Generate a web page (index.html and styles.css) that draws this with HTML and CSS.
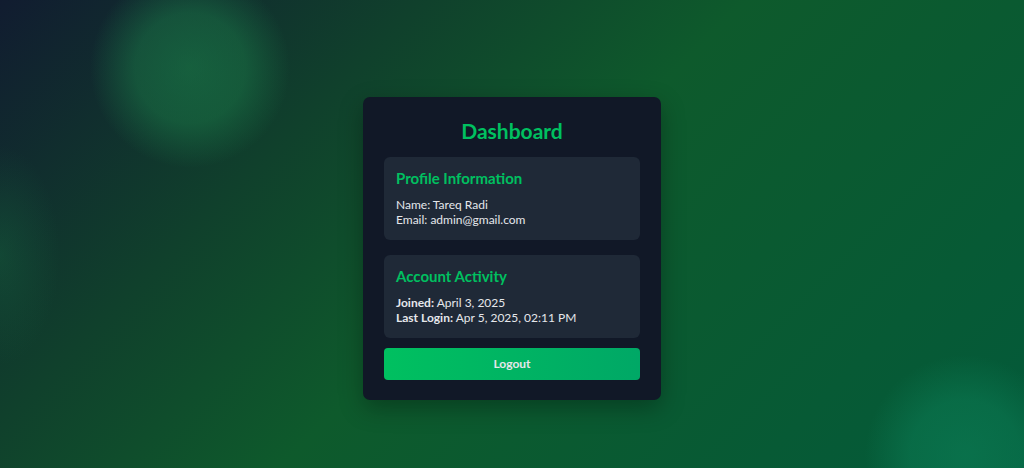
FILE: index.html
```html
<!DOCTYPE html>
<html lang="en">

<head>
    <meta charset="UTF-8">
    <meta name="viewport" content="width=device-width, initial-scale=1.0">
    <title>Dashboard</title>
    <link rel="stylesheet" href="styles.css">
</head>

<body>
    <main class="card">
        <h1 class="title">Dashboard</h1>

        <section class="panel">
            <h2 class="panel-title">Profile Information</h2>
            <p>Name: Tareq Radi</p>
            <p>Email: admin@gmail.com</p>
        </section>

        <section class="panel">
            <h2 class="panel-title">Account Activity</h2>
            <p><b>Joined:</b> April 3, 2025</p>
            <p><b>Last Login:</b> Apr 5, 2025, 02:11 PM</p>
        </section>

        <button class="logout">Logout</button>
    </main>
</body>

</html>
```

FILE: styles.css
```css
* {
    margin: 0;
    padding: 0;
    box-sizing: border-box;
}

html {
    overflow: hidden;
}

body {
    height: 100vh;
    display: flex;
    justify-content: center;
    align-items: center;
    padding-top: 28px;
    font-family: Lato, "Open Sans", sans-serif;
    /* glow circles + base gradient */
    background:
        radial-gradient(circle at 190px 68px, rgba(28, 140, 78, 0.5) 0, rgba(28, 140, 78, 0.4) 55px, rgba(28, 140, 78, 0) 100px),
        radial-gradient(circle at 965px 455px, rgba(12, 125, 85, 0.65) 0, rgba(12, 125, 85, 0.5) 55px, rgba(12, 125, 85, 0) 100px),
        radial-gradient(ellipse 60px 110px at 0 255px, rgba(22, 110, 65, 0.35) 0, rgba(22, 110, 65, 0) 100%),
        linear-gradient(135deg, #111c30 0%, #10402c 28%, #0e5a2c 50%, #035a3a 100%);
}

.card {
    width: 298px;
    padding: 20px 21px 20px;
    background: #111827;
    border-radius: 7px;
    box-shadow: 0 8px 24px rgba(0, 0, 0, 0.3);
    display: flex;
    flex-direction: column;
}

.title {
    text-align: center;
    color: #00c060;
    font-size: 21px;
    line-height: 28px;
    font-weight: 700;
    margin-bottom: 12px;
}

.panel {
    background: #1f2937;
    border-radius: 6px;
    padding: 11px 12px 13px;
    margin-bottom: 15px;
    color: #e5e7eb;
    font-size: 12px;
    line-height: 15px;
}

.panel + .panel {
    margin-bottom: 10px;
}

.panel-title {
    color: #00c060;
    font-size: 15px;
    line-height: 20px;
    font-weight: 700;
    margin-bottom: 9px;
}

.panel b {
    font-weight: 700;
}

.logout {
    height: 32px;
    border: none;
    border-radius: 4px;
    background: linear-gradient(90deg, #00c060 0%, #00a866 100%);
    color: #e5e7eb;
    font-family: inherit;
    font-size: 12px;
    font-weight: 700;
}
```
